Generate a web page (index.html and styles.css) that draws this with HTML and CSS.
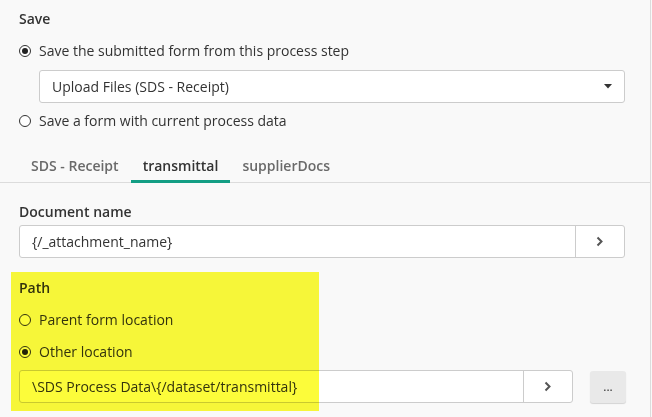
FILE: index.html
```html
<!DOCTYPE html>
<html>
<head>
<meta charset="utf-8">
<link rel="stylesheet" href="styles.css">
</head>
<body>
<div class="panel">
  <div class="section">
    <div class="label">Save</div>
    <div class="radio-row"><span class="radio checked"></span><span>Save the submitted form from this process step</span></div>
    <div class="select">
      <span>Upload Files (SDS - Receipt)</span>
      <svg class="caret" width="8" height="5" viewBox="0 0 8 5"><path d="M0 0H8L4 4.5Z" fill="#333"/></svg>
    </div>
    <div class="radio-row second"><span class="radio"></span><span>Save a form with current process data</span></div>
  </div>
  <div class="tabs">
    <div class="tab">SDS - Receipt</div>
    <div class="tab active">transmittal</div>
    <div class="tab">supplierDocs</div>
  </div>
  <div class="section body">
    <div class="label">Document name</div>
    <div class="input-row">
      <div class="input"><span class="value">{/_attachment_name}</span><span class="chev"><svg width="8" height="11" viewBox="0 0 8 11"><path d="M1.5 1.5L5.5 5.5L1.5 9.5" fill="none" stroke="#555" stroke-width="2"/></svg></span></div>
    </div>
    <div class="path">
      <div class="label">Path</div>
      <div class="radio-row"><span class="radio"></span><span>Parent form location</span></div>
      <div class="radio-row"><span class="radio checked"></span><span>Other location</span></div>
      <div class="input-row">
        <div class="input short"><span class="value">\SDS Process Data\{/dataset/transmittal}</span><span class="chev"><svg width="8" height="11" viewBox="0 0 8 11"><path d="M1.5 1.5L5.5 5.5L1.5 9.5" fill="none" stroke="#555" stroke-width="2"/></svg></span></div>
        <div class="dots">...</div>
      </div>
      <div class="highlight"></div>
    </div>
  </div>
</div>
</body>
</html>
```
FILE: styles.css
```css
html, body { margin: 0; padding: 0; }
body {
  background: #f9f9f9;
  font-family: "Open Sans", "Noto Sans", sans-serif;
  font-size: 14px;
  color: #333;
  width: 652px;
  height: 417px;
  overflow: hidden;
}
.panel {
  width: 650px;
  height: 417px;
  border-right: 1px solid #dcdcdc;
}
.section { padding: 0 25px 0 19px; }
.label {
  font-weight: 600;
  height: 20px;
  line-height: 20px;
  padding-top: 9px;
}
.radio-row {
  display: flex;
  align-items: center;
  gap: 8px;
  height: 20px;
  line-height: 20px;
}
.section > .radio-row { margin-top: 12px; }
.section > .radio-row.second { margin-top: 8px; }
.radio {
  width: 10px;
  height: 10px;
  border: 1px solid #333;
  border-radius: 50%;
  background: #fff;
  position: relative;
  flex: none;
}
.radio.checked::after {
  content: "";
  position: absolute;
  left: 2px; top: 2px;
  width: 6px; height: 6px;
  border-radius: 50%;
  background: #222;
}
.select {
  margin: 9px 0 0 20px;
  height: 31px;
  border: 1px solid #ccc;
  border-radius: 3px;
  background: #fff;
  display: flex;
  align-items: center;
  justify-content: space-between;
  padding: 0 12px 0 12px;
}
.tabs {
  margin-top: 18px;
  display: flex;
  padding-left: 19px;
  border-bottom: 1px solid #dcdcdc;
  height: 34px;
  box-sizing: border-box;
}
.tab {
  padding: 0 12px;
  line-height: 34px;
  font-weight: 600;
  color: #6a6a6a;
  height: 33px;
}
.tab.active {
  color: #333;
  border-bottom: 3px solid #139e84;
  height: 31px;
  position: relative;
}
.body .label { padding-top: 19px; }
.input-row {
  display: flex;
  align-items: center;
  margin-top: 3px;
  gap: 17px;
}
.input {
  flex: 1;
  height: 31px;
  border: 1px solid #ccc;
  border-radius: 3px;
  background: #fff;
  display: flex;
  align-items: center;
}
.input .value { flex: 1; padding-left: 12px; }
.chev {
  width: 48px;
  height: 31px;
  border-left: 1px solid #ccc;
  display: flex;
  align-items: center;
  justify-content: center;
}
.path { position: relative; }
.path .label { padding-top: 20px; }
.path .radio-row { margin-top: 12px; }
.path .input-row { margin-top: 8px; }
.input.short { flex: none; width: 552px; }
.dots {
  width: 36px;
  height: 32px;
  margin-right: -1px;
  background: #e9e9e9;
  border-radius: 3px;
  box-shadow: 0 1px 1px rgba(0,0,0,0.15);
  display: flex;
  align-items: center;
  justify-content: center;
  font-size: 12px;
  line-height: 32px;
}
.highlight {
  position: absolute;
  left: -8px;
  top: 14px;
  width: 308px;
  height: 139px;
  background: #fcfc3a;
  mix-blend-mode: multiply;
}
```
